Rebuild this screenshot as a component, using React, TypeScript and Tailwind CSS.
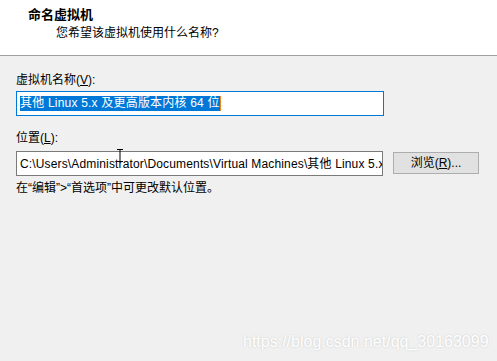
export default function App() {
  const font = { fontFamily: '"Liberation Sans", "Noto Sans CJK SC", sans-serif' };

  return (
    <div
      className="relative w-[497px] h-[361px] overflow-hidden bg-[#f0f0f0] text-black"
      style={font}
    >
      {/* Header */}
      <div className="h-[56px] bg-white border-b border-[#a0a0a0]">
        <div className="pl-[28px] pt-[6px] text-[13px] leading-[17px] font-bold">命名虚拟机</div>
        <div className="pl-[56px] mt-[2px] text-[12px] leading-[17px]">您希望该虚拟机使用什么名称?</div>
      </div>

      {/* Body */}
      <div className="px-[16px] text-[12px]">
        <div className="mt-[16px] leading-[16px]">
          虚拟机名称(<span className="underline">V</span>):
        </div>
        <div className="mt-[3px] w-[368px] h-[25px] bg-white border border-[#0078d7] flex items-center pl-[3px]">
          <span className="bg-[#0078d7] text-white leading-[15px] whitespace-pre tracking-[0.2px]">其他 Linux 5.x 及更高版本内核 64 位</span>
          <span className="w-px h-[15px] bg-[#f0841f]" />
        </div>

        <div className="mt-[14px] leading-[16px]">
          位置(<span className="underline">L</span>):
        </div>
        <div className="mt-[5px] flex items-start">
          <div className="w-[367px] h-[25px] bg-white border border-[#7a7a7a] flex items-center pl-[3px] overflow-hidden whitespace-nowrap tracking-[0.15px]">
            C:\Users\Administrator\Documents\Virtual Machines\其他 Linux 5.x
          </div>
          <button className="ml-[10px] mt-[1px] w-[86px] h-[22px] bg-[#e1e1e1] border border-[#adadad] text-[12px] leading-[16px] flex items-center justify-center">
            浏览(<span className="underline">R</span>)...
          </button>
        </div>

        <div className="mt-[4px] leading-[16px]">在“编辑”&gt;“首选项”中可更改默认位置。</div>
      </div>

      {/* mouse cursor */}
      <svg className="absolute left-[116px] top-[149px]" width="8" height="13" viewBox="0 0 8 13">
        <path d="M1 0.5 H7 M4 0.5 V12.5 M1 12.5 H7" stroke="#000" strokeWidth="1" fill="none" />
      </svg>

      {/* watermark */}
      <div
        className="absolute left-[243px] top-[333px] text-[16px] leading-[18px] text-white whitespace-nowrap [text-shadow:0_0_2px_rgba(0,0,0,0.18)]"
        style={{ fontFamily: '"Liberation Sans", Arial, sans-serif' }}
      >
        https://blog.csdn.net/qq_30163099
      </div>
    </div>
  );
}
